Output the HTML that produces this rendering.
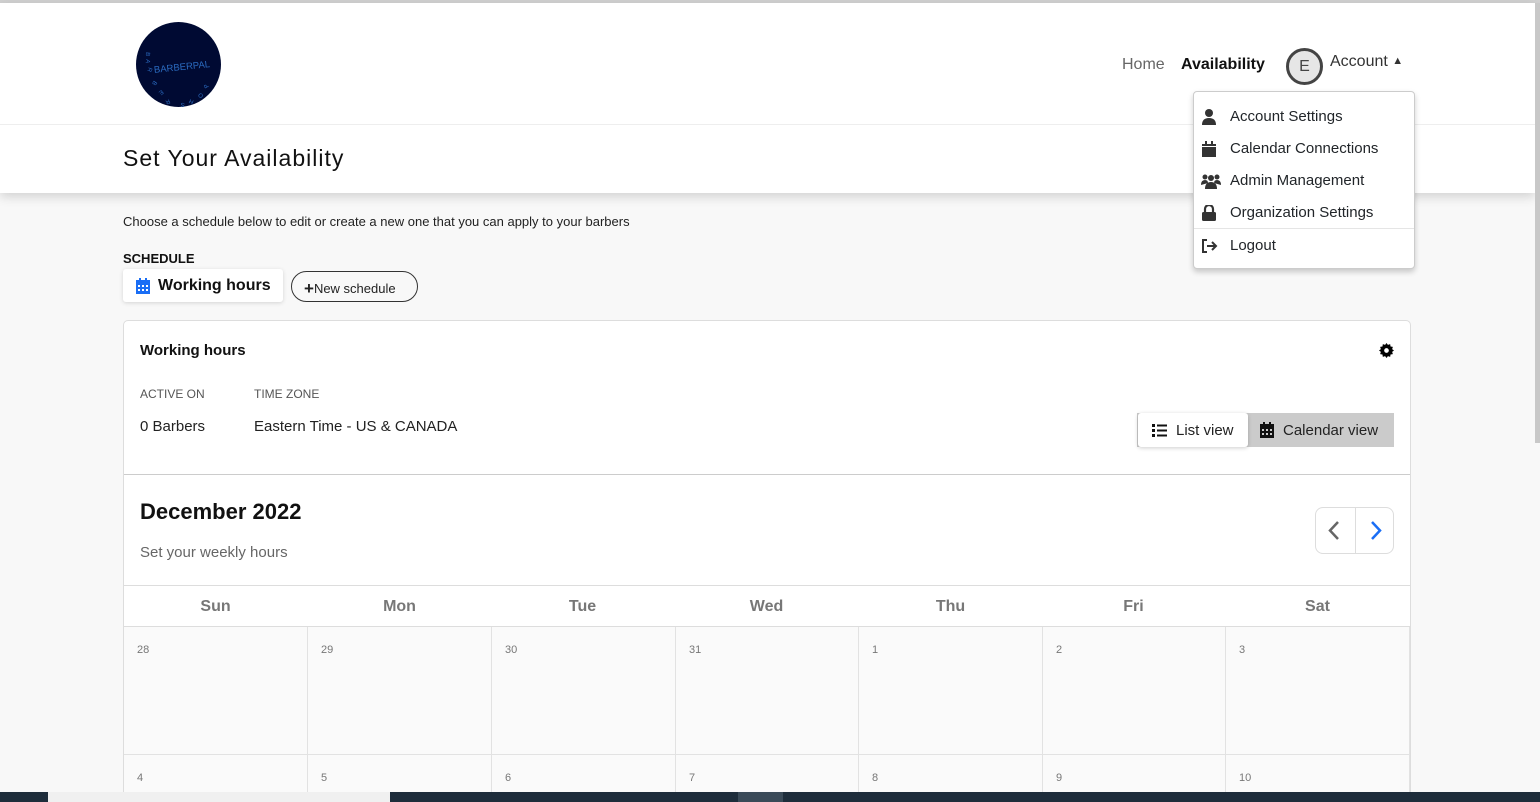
<!DOCTYPE html>
<html><head><meta charset="utf-8"><style>
*{box-sizing:border-box;margin:0;padding:0}
html,body{width:1540px;height:802px;overflow:hidden}
body{background:#f8f8f8;font-family:"Liberation Sans",sans-serif;color:#212529;position:relative}
.topline{position:absolute;left:0;top:0;width:1540px;height:3px;background:#d0d0d0}
.scroll{position:absolute;right:0;top:3px;width:5px;height:440px;background:#c8c8c8}
.header{position:absolute;left:0;top:3px;width:1535px;height:190px;background:#fff;box-shadow:0 4px 10px rgba(0,0,0,.15)}
.hline{position:absolute;left:0;top:121px;width:100%;height:1px;background:#eee}
.logo{position:absolute;left:136px;top:19px;width:85px;height:85px;border-radius:50%;background:#000a33}
.nav{position:absolute;top:53px;font-size:16px}
.title{position:absolute;left:123px;top:142px;font-size:23px;letter-spacing:1px;color:#111}
.avatar{position:absolute;left:1286px;top:45px;width:37px;height:37px;border-radius:50%;border:3px solid #444;background:#e6e6e6;font-size:16px;text-align:center;line-height:31px;color:#444}
.dd{position:absolute;left:1193px;top:91px;width:222px;height:178px;background:#fff;border:1px solid #ccc;border-radius:4px;box-shadow:0 3px 6px rgba(0,0,0,.2);z-index:5}
.dd div{position:absolute;left:36px;font-size:15px;color:#212529}
.dd svg{position:absolute;left:-28px;top:1px}
.card{position:absolute;left:123px;top:320px;width:1288px;height:472px;background:#fff;border:1px solid #ddd;border-bottom:none;border-radius:5px 5px 0 0;overflow:hidden}
.g{position:absolute}
.cell{position:absolute;background:#fafafa;border-right:1px solid #e2e2e2;border-bottom:1px solid #e2e2e2;font-size:11px;color:#777;padding:17px 0 0 13px}
.day{position:absolute;top:277px;font-size:16px;font-weight:bold;color:#777;text-align:center;width:183px}
.taskbar{position:absolute;left:0;top:792px;width:1540px;height:10px;background:#1e2d3b;z-index:10}
</style></head><body>
<div class="topline"></div>
<div class="header">
<div class="logo"><svg width="85" height="85" viewBox="0 0 85 85" font-family="Liberation Sans" fill="#2a6bc0"><text x="46" y="48" font-size="9.5" text-anchor="middle" transform="rotate(-6 46 45)">BARBERPAL</text>
<g font-size="6" text-anchor="middle"><text x="10" y="32" transform="rotate(95 10 32)">B</text><text x="10" y="39" transform="rotate(100 10 39)">A</text><text x="12" y="47" transform="rotate(110 12 47)">R</text><text x="17" y="60" transform="rotate(125 17 60)">B</text><text x="24" y="69" transform="rotate(140 24 69)">E</text><text x="31" y="78" transform="rotate(155 31 78)">R</text><text x="47" y="81" transform="rotate(190 47 81)">S</text><text x="56" y="78" transform="rotate(205 56 78)">H</text><text x="66" y="72" transform="rotate(220 66 72)">O</text><text x="72" y="63" transform="rotate(240 72 63)">P</text></g></svg></div>
<div class="hline"></div>
<div class="nav" style="left:1122px;color:#666">Home</div>
<div class="nav" style="left:1181px;font-weight:bold;color:#111">Availability</div>
<div class="avatar">E</div>
<div class="nav" style="left:1330px;top:50px;color:#333">Account <span style="font-size:11px;position:relative;top:-2px">▲</span></div>
<div class="title">Set Your Availability</div>
</div>
<div class="scroll"></div>
<div class="dd">
<div style="top:16px"><svg width="14" height="16" viewBox="0 0 14 16"><circle cx="7" cy="4" r="4" fill="#333"/><path d="M0 16 Q0 9 7 9 Q14 9 14 16Z" fill="#333"/></svg>Account Settings</div>
<div style="top:48px"><svg width="14" height="16" viewBox="0 0 14 16"><rect x="0" y="3" width="14" height="13" fill="#333"/><rect x="3" y="0" width="2" height="4" fill="#333"/><rect x="9" y="0" width="2" height="4" fill="#333"/><rect x="0" y="5" width="14" height="1" fill="#fff"/></svg>Calendar Connections</div>
<div style="top:80px"><svg width="20" height="16" viewBox="0 0 20 16" style="left:-29px"><circle cx="4" cy="4" r="2.5" fill="#333"/><circle cx="16" cy="4" r="2.5" fill="#333"/><circle cx="10" cy="5" r="3" fill="#333"/><path d="M0 12 Q0 7 4 7 Q7 7 7 10Z M20 12 Q20 7 16 7 Q13 7 13 10Z M4 16 Q4 9 10 9 Q16 9 16 16Z" fill="#333"/></svg>Admin Management</div>
<div style="top:112px"><svg width="14" height="16" viewBox="0 0 14 16"><path d="M3 7 V4 A4 4 0 0 1 11 4 V7" stroke="#333" stroke-width="2.2" fill="none"/><rect x="0" y="7" width="14" height="9" rx="1.5" fill="#333"/></svg>Organization Settings</div>
<div style="left:0;top:136px;width:220px;height:1px;background:#e5e5e5"></div>
<div style="top:145px"><svg width="16" height="16" viewBox="0 0 16 16"><path d="M5 2H1V14H5" stroke="#333" stroke-width="2" fill="none"/><path d="M5 8H14M10 4L14 8L10 12" stroke="#333" stroke-width="2" fill="none"/></svg>Logout</div>
</div>
<div class="g" style="left:123px;top:214px;font-size:13px;color:#222">Choose a schedule below to edit or create a new one that you can apply to your barbers</div>
<div class="g" style="left:123px;top:251px;font-size:13px;font-weight:bold;color:#111">SCHEDULE</div>
<div class="g" style="left:123px;top:269px;width:160px;height:33px;background:#fff;border-radius:3px;box-shadow:0 1px 4px rgba(0,0,0,.15);font-size:16px;font-weight:bold;color:#111;padding:8px 0 0 35px"><svg width="14" height="16" viewBox="0 0 14 16" style="position:absolute;left:13px;top:9px"><rect x="0" y="2" width="14" height="14" fill="#1a6ef5"/><rect x="3" y="0" width="2" height="3" fill="#1a6ef5"/><rect x="9" y="0" width="2" height="3" fill="#1a6ef5"/><g fill="#fff"><rect x="2" y="7" width="2" height="2"/><rect x="6" y="7" width="2" height="2"/><rect x="10" y="7" width="2" height="2"/><rect x="2" y="11" width="2" height="2"/><rect x="6" y="11" width="2" height="2"/><rect x="10" y="11" width="2" height="2"/></g></svg>Working hours</div>
<div class="g" style="left:291px;top:271px;width:127px;height:31px;border:1px solid #333;border-radius:16px;font-size:13px;color:#222;padding:6px 0 0 12px"><b style="font-size:17px;position:relative;top:1px">+</b>New schedule</div>
<div class="card">
<div class="g" style="left:16px;top:21px;font-size:15px;font-weight:bold;color:#111">Working hours</div>
<svg class="g" style="left:1255px;top:22px" width="15" height="15" viewBox="0 0 16 16"><path d="M8 0l1.5 2 2.4-.8.4 2.5 2.5.4-.8 2.4L16 8l-2 1.5.8 2.4-2.5.4-.4 2.5-2.4-.8L8 16l-1.5-2-2.4.8-.4-2.5-2.5-.4.8-2.4L0 8l2-1.5-.8-2.4 2.5-.4.4-2.5 2.4.8z" fill="#000"/><circle cx="8" cy="8" r="2.5" fill="#fff"/></svg>
<div class="g" style="left:16px;top:66px;font-size:12px;color:#555">ACTIVE ON</div>
<div class="g" style="left:130px;top:66px;font-size:12px;color:#555">TIME ZONE</div>
<div class="g" style="left:16px;top:97px;font-size:15px;color:#222">0 Barbers</div>
<div class="g" style="left:130px;top:97px;font-size:15px;color:#222">Eastern Time - US &amp; CANADA</div>
<div class="g" style="left:1013px;top:92px;width:257px;height:34px;background:#cbcbcb"></div>
<div class="g" style="left:1014px;top:92px;width:110px;height:34px;background:#fff;border-radius:3px;box-shadow:0 1px 4px rgba(0,0,0,.2);font-size:15px;padding:9px 0 0 38px;color:#222"><svg width="15" height="13" viewBox="0 0 15 13" style="position:absolute;left:14px;top:11px"><g fill="#111"><rect x="0" y="0" width="3" height="3"/><rect x="0" y="5" width="3" height="3"/><rect x="0" y="10" width="3" height="3"/><rect x="5" y="0.5" width="10" height="2"/><rect x="5" y="5.5" width="10" height="2"/><rect x="5" y="10.5" width="10" height="2"/></g></svg>List view</div>
<div class="g" style="left:1136px;top:101px;font-size:15px;color:#222;padding-left:23px"><svg width="14" height="16" viewBox="0 0 14 16" style="position:absolute;left:0;top:0"><rect x="0" y="2" width="14" height="14" fill="#111"/><rect x="3" y="0" width="2" height="3" fill="#111"/><rect x="9" y="0" width="2" height="3" fill="#111"/><g fill="#cbcbcb"><rect x="2" y="7" width="2" height="2"/><rect x="6" y="7" width="2" height="2"/><rect x="10" y="7" width="2" height="2"/><rect x="2" y="11" width="2" height="2"/><rect x="6" y="11" width="2" height="2"/><rect x="10" y="11" width="2" height="2"/></g></svg>Calendar view</div>
<div class="g" style="left:0;top:153px;width:100%;height:1px;background:#ccc"></div>
<div class="g" style="left:16px;top:178px;font-size:22px;font-weight:bold;color:#111">December 2022</div>
<div class="g" style="left:16px;top:223px;font-size:15px;color:#666">Set your weekly hours</div>
<div class="g" style="left:1191px;top:186px;width:79px;height:47px;border:1px solid #ddd;border-radius:8px"></div>
<div class="g" style="left:1231px;top:186px;width:1px;height:47px;background:#ddd"></div>
<svg class="g" style="left:1203px;top:199px" width="14" height="21"><path d="M11 2L3 10.5L11 19" stroke="#666" stroke-width="2.5" fill="none"/></svg>
<svg class="g" style="left:1245px;top:199px" width="14" height="21"><path d="M3 2L11 10.5L3 19" stroke="#1a6ef5" stroke-width="2.5" fill="none"/></svg>
<div class="g" style="left:0;top:264px;width:100%;height:1px;background:#ddd"></div>
<div class="day" style="left:0">Sun</div><div class="day" style="left:184px">Mon</div><div class="day" style="left:367px">Tue</div><div class="day" style="left:551px">Wed</div><div class="day" style="left:735px">Thu</div><div class="day" style="left:918px">Fri</div><div class="day" style="left:1102px">Sat</div>
<div class="g" style="left:0;top:305px;width:100%;height:1px;background:#ddd"></div>
<div class="cell" style="left:0;top:306px;width:184px;height:128px">28</div>
<div class="cell" style="left:184px;top:306px;width:184px;height:128px">29</div>
<div class="cell" style="left:368px;top:306px;width:184px;height:128px">30</div>
<div class="cell" style="left:552px;top:306px;width:183px;height:128px">31</div>
<div class="cell" style="left:735px;top:306px;width:184px;height:128px">1</div>
<div class="cell" style="left:919px;top:306px;width:183px;height:128px">2</div>
<div class="cell" style="left:1102px;top:306px;width:184px;height:128px">3</div>
<div class="cell" style="left:0;top:434px;width:184px;height:38px;border-bottom:none">4</div>
<div class="cell" style="left:184px;top:434px;width:184px;height:38px;border-bottom:none">5</div>
<div class="cell" style="left:368px;top:434px;width:184px;height:38px;border-bottom:none">6</div>
<div class="cell" style="left:552px;top:434px;width:183px;height:38px;border-bottom:none">7</div>
<div class="cell" style="left:735px;top:434px;width:184px;height:38px;border-bottom:none">8</div>
<div class="cell" style="left:919px;top:434px;width:183px;height:38px;border-bottom:none">9</div>
<div class="cell" style="left:1102px;top:434px;width:184px;height:38px;border-bottom:none">10</div>
</div>
<div class="taskbar"><div style="position:absolute;left:48px;top:0;width:342px;height:10px;background:#f0f0f0"></div><div style="position:absolute;left:738px;top:0;width:45px;height:10px;background:#3a4a58"></div></div>
</body></html>
